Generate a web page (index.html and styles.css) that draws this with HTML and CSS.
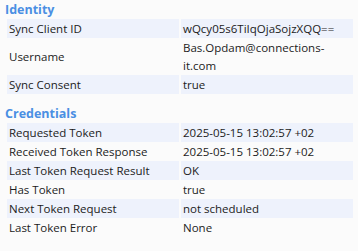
FILE: index.html
```html
<!DOCTYPE html>
<html>
<head>
<meta charset="utf-8">
<link rel="stylesheet" href="styles.css">
</head>
<body>
<div class="panel">
  <section class="section">
    <h2 class="section-title">Identity</h2>
    <div class="grid">
      <div class="cell label band">Sync Client ID</div>
      <div class="cell value band">wQcy05s6TiIqOjaSojzXQQ==</div>
      <div class="cell label mid">Username</div>
      <div class="cell value">Bas.Opdam@connections-it.com</div>
      <div class="cell label band">Sync Consent</div>
      <div class="cell value band">true</div>
    </div>
  </section>
  <section class="section">
    <h2 class="section-title">Credentials</h2>
    <div class="grid">
      <div class="cell label band">Requested Token</div>
      <div class="cell value band">2025-05-15 13:02:57 +02</div>
      <div class="cell label">Received Token Response</div>
      <div class="cell value">2025-05-15 13:02:57 +02</div>
      <div class="cell label band">Last Token Request Result</div>
      <div class="cell value band">OK</div>
      <div class="cell label">Has Token</div>
      <div class="cell value">true</div>
      <div class="cell label band">Next Token Request</div>
      <div class="cell value band">not scheduled</div>
      <div class="cell label">Last Token Error</div>
      <div class="cell value">None</div>
    </div>
  </section>
</div>
</body>
</html>
```
FILE: styles.css
```css
html, body {
  margin: 0;
  padding: 0;
  background: #fbfbfb;
}
body {
  font-family: "Open Sans", "Noto Sans", sans-serif;
  font-size: 11.5px;
  color: #1b1b1b;
}
.panel {
  display: flex;
  flex-direction: column;
  gap: 11px;
  padding: 0 5px 0 0;
}
.section-title {
  margin: 0;
  height: 19px;
  padding-left: 5px;
  font-size: 12.5px;
  font-weight: 700;
  line-height: 19px;
  color: #4a8fe3;
}
.grid {
  display: grid;
  grid-template-columns: 1fr 1fr;
  column-gap: 2px;
  row-gap: 1px;
  padding-left: 7px;
}
.cell {
  line-height: 18px;
  padding-left: 2px;
  padding-top: 1px;
  margin-bottom: -1px;
}
.cell.mid {
  display: flex;
  align-items: center;
}
.band {
  background: #eef2fc;
}
```
